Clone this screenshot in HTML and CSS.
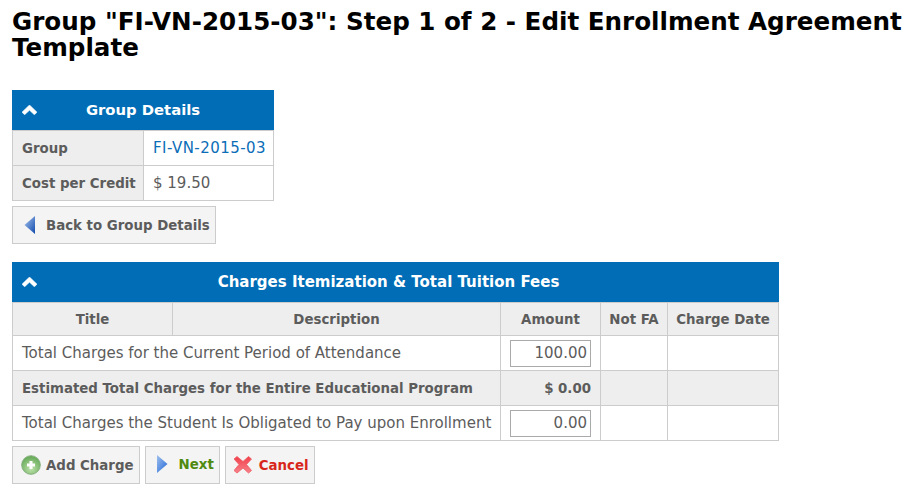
FILE: index.html
```html
<!DOCTYPE html>
<html lang="en">
<head>
<meta charset="utf-8">
<title>Edit Enrollment Agreement Template</title>
<link rel="stylesheet" href="styles.css">
</head>
<body>
<h1 class="page-title">Group "FI-VN-2015-03": Step 1 of 2 - Edit Enrollment Agreement Template</h1>

<section class="panel panel-group">
  <div class="panel-head head-group">
    <svg class="chevron" viewBox="0 0 15 10" width="15" height="10"><path d="M0 7.2 L7.5 0 L15 7.2 L12.4 9.8 L7.5 5.2 L2.6 9.8 Z" fill="#fff" stroke="#fff" stroke-width=".6" stroke-linejoin="round"/></svg>
    <span>Group Details</span>
  </div>
  <table class="grid group-grid">
    <tr><th class="label">Group</th><td><a href="#">FI-VN-2015-03</a></td></tr>
    <tr><th class="label">Cost per Credit</th><td>$ 19.50</td></tr>
  </table>
</section>

<div class="actions">
  <a class="btn" href="#">
    <svg class="ico" width="20" height="20" viewBox="0 0 20 20"><defs><linearGradient id="bl" x1="0" x2="1" y1="0" y2="1"><stop offset="0" stop-color="#a8c6ee"/><stop offset="1" stop-color="#0f49ad"/></linearGradient></defs><path d="M14 1 V19 L3.5 10 Z" fill="url(#bl)"/></svg>
    <span>Back to Group Details</span>
  </a>
</div>

<section class="panel panel-charges">
  <div class="panel-head head-offset">
    <svg class="chevron" viewBox="0 0 15 10" width="15" height="10"><path d="M0 7.2 L7.5 0 L15 7.2 L12.4 9.8 L7.5 5.2 L2.6 9.8 Z" fill="#fff" stroke="#fff" stroke-width=".6" stroke-linejoin="round"/></svg>
    <span>Charges Itemization &amp; Total Tuition Fees</span>
  </div>
  <table class="grid charges-grid">
    <colgroup><col class="c1"><col class="c2"><col class="c3"><col class="c4"><col class="c5"></colgroup>
    <tr class="head-row"><th>Title</th><th>Description</th><th>Amount</th><th>Not FA</th><th>Charge Date</th></tr>
    <tr><td colspan="2">Total Charges for the Current Period of Attendance</td><td class="amount"><input class="amount-input" type="text" value="100.00"></td><td></td><td></td></tr>
    <tr class="total-row"><th colspan="2">Estimated Total Charges for the Entire Educational Program</th><th class="amount">$ 0.00</th><td></td><td></td></tr>
    <tr><td colspan="2">Total Charges the Student Is Obligated to Pay upon Enrollment</td><td class="amount"><input class="amount-input" type="text" value="0.00"></td><td></td><td></td></tr>
  </table>
</section>

<div class="actions bottom">
  <a class="btn" href="#">
    <svg class="ico" width="20" height="20" viewBox="0 0 20 20"><defs><radialGradient id="gr" cx="0.5" cy="0.7" r="0.65"><stop offset="0" stop-color="#bfe3ad"/><stop offset="1" stop-color="#66aa58"/></radialGradient></defs><circle cx="10" cy="10" r="9.3" fill="url(#gr)" stroke="#86b07e"/><path d="M10 6 V14 M6 10 H14" stroke="#fff" stroke-width="3"/></svg>
    <span>Add Charge</span>
  </a>
  <a class="btn btn-next" href="#">
    <svg class="ico" width="20" height="20" viewBox="0 0 20 20"><defs><linearGradient id="nx" x1="0" x2="1" y1="0" y2="1"><stop offset="0" stop-color="#9fc0ee"/><stop offset="1" stop-color="#1f66d6"/></linearGradient></defs><path d="M3 1 V19 L13.5 10 Z" fill="url(#nx)"/></svg>
    <span>Next</span>
  </a>
  <a class="btn btn-cancel" href="#">
    <svg class="ico" width="20" height="20" viewBox="0 0 20 20"><defs><linearGradient id="rd" x1="0" x2="0" y1="0" y2="1"><stop offset="0" stop-color="#f23f4a"/><stop offset="1" stop-color="#f7828a"/></linearGradient></defs><path d="M0 4 L3 1.5 L9 6.5 L14.5 1.5 L17.5 4 L12.5 9.5 L17.5 15.5 L14.5 18 L9 13 L3 18 L0 15.5 L5 9.5 Z" fill="url(#rd)" stroke="#ee5a62" stroke-width=".8" stroke-linejoin="round"/></svg>
    <span>Cancel</span>
  </a>
</div>
</body>
</html>
```
FILE: styles.css
```css
* { box-sizing: border-box; }
body {
  margin: 0;
  padding: 9px 8px 0 12px;
  background: #fff;
  color: #5c5c5c;
  font-family: "DejaVu Sans", Verdana, sans-serif;
  font-size: 15px;
}
.page-title {
  margin: 0 0 29px;
  font-size: 24.6px;
  line-height: 26px;
  font-weight: 700;
  color: #000;
}
.panel-head {
  position: relative;
  height: 40px;
  display: flex;
  align-items: center;
  justify-content: center;
  background: #006db6;
  color: #fff;
  font-size: 14.8px;
  font-weight: 700;
}
.head-group { padding-bottom: 2px; }
.head-offset { padding-right: 14px; font-size: 15px; }
.chevron { position: absolute; left: 10px; top: 15px; }
.panel-group { width: 262px; }
.panel-charges { width: 767px; margin-top: 18px; }
.grid {
  width: 100%;
  border-collapse: collapse;
  table-layout: fixed;
}
.grid th, .grid td {
  border: 1px solid #ccc;
  height: 35px;
  padding: 0 9px;
  text-align: left;
  font-weight: 400;
  white-space: nowrap;
}
.grid th {
  background: #eee;
  font-weight: 700;
  font-size: 13.35px;
}
.group-grid .label { width: 131px; }
.grid a { color: #0b6db7; text-decoration: none; letter-spacing: 0.45px; }
.c1 { width: 160px; }
.c2 { width: 328px; }
.c3 { width: 100px; }
.c4 { width: 67px; }
.c5 { width: 111px; }
.head-row th { height: 33px; text-align: center; padding: 0; }
.grid th.amount, .grid td.amount { text-align: right; }
.total-row td { background: #eee; }
.amount-input {
  display: block;
  width: 81px;
  height: 27px;
  margin-left: auto;
  padding: 0 3px;
  border: 1px solid #aaa;
  background: #fff;
  color: #5c5c5c;
  text-align: right;
  font: 15px "DejaVu Sans", Verdana, sans-serif;
}
.actions { display: flex; gap: 5px; margin-top: 5px; }
.btn {
  display: flex;
  align-items: center;
  gap: 5px;
  height: 38px;
  padding: 0 5px 0 8px;
  border: 1px solid #ccc;
  background: #f4f4f4;
  color: #5c5c5c;
  font-size: 13.35px;
  font-weight: 700;
  text-decoration: none;
  white-space: nowrap;
}
.btn-next { color: #4f8a10; padding-bottom: 2px; }
.btn-cancel { color: #d8261c; }
```
